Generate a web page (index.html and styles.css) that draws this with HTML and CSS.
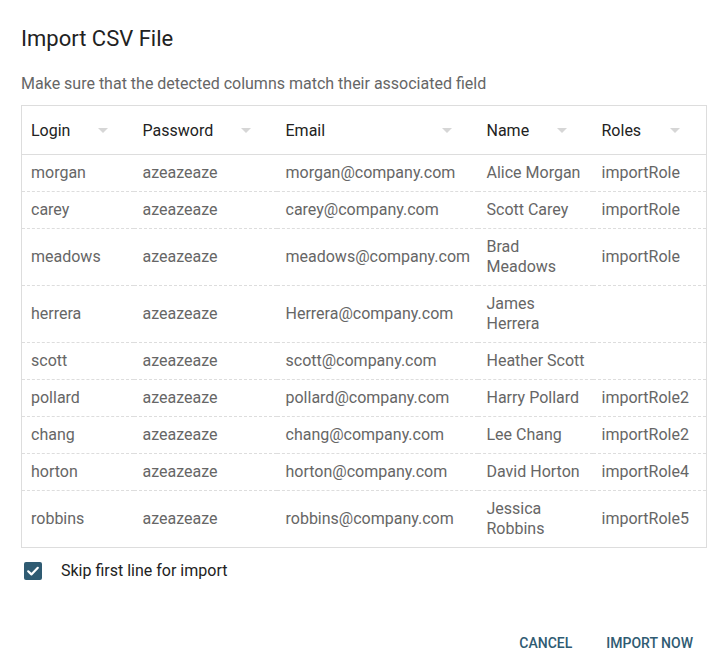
FILE: index.html
```html
<!DOCTYPE html>
<html>
<head>
<meta charset="utf-8">
<link rel="stylesheet" href="styles.css">
</head>
<body>
<div class="dialog">
  <h1 class="title">Import CSV File</h1>
  <p class="subtitle">Make sure that the detected columns match their associated field</p>
  <table class="grid">
    <colgroup>
      <col class="c1"><col class="c2"><col class="c3"><col class="c4"><col class="c5">
    </colgroup>
    <thead>
      <tr>
        <th><div class="hd"><span>Login</span><span class="caret"></span></div></th>
        <th><div class="hd"><span>Password</span><span class="caret"></span></div></th>
        <th><div class="hd"><span>Email</span><span class="caret"></span></div></th>
        <th><div class="hd"><span>Name</span><span class="caret"></span></div></th>
        <th><div class="hd"><span>Roles</span><span class="caret"></span></div></th>
      </tr>
    </thead>
    <tbody>
      <tr><td>morgan</td><td>azeazeaze</td><td>morgan@company.com</td><td>Alice Morgan</td><td>importRole</td></tr>
      <tr><td>carey</td><td>azeazeaze</td><td>carey@company.com</td><td>Scott Carey</td><td>importRole</td></tr>
      <tr><td>meadows</td><td>azeazeaze</td><td>meadows@company.com</td><td>Brad Meadows</td><td>importRole</td></tr>
      <tr><td>herrera</td><td>azeazeaze</td><td>Herrera@company.com</td><td>James Herrera</td><td></td></tr>
      <tr><td>scott</td><td>azeazeaze</td><td>scott@company.com</td><td>Heather Scott</td><td></td></tr>
      <tr><td>pollard</td><td>azeazeaze</td><td>pollard@company.com</td><td>Harry Pollard</td><td>importRole2</td></tr>
      <tr><td>chang</td><td>azeazeaze</td><td>chang@company.com</td><td>Lee Chang</td><td>importRole2</td></tr>
      <tr><td>horton</td><td>azeazeaze</td><td>horton@company.com</td><td>David Horton</td><td>importRole4</td></tr>
      <tr><td>robbins</td><td>azeazeaze</td><td>robbins@company.com</td><td>Jessica Robbins</td><td>importRole5</td></tr>
    </tbody>
  </table>
  <label class="check">
    <span class="box"><svg width="18" height="18" viewBox="0 0 18 18"><path d="M4.2 9.3 L7.4 12.4 L13.8 5.8" fill="none" stroke="#fff" stroke-width="2.2" stroke-linecap="round" stroke-linejoin="round"/></svg></span>
    <span class="check-label">Skip first line for import</span>
  </label>
  <div class="actions">
    <button class="btn">Cancel</button>
    <button class="btn">Import now</button>
  </div>
</div>
</body>
</html>
```
FILE: styles.css
```css
html, body {
  margin: 0;
  padding: 0;
  background: #fff;
}
body {
  font-family: Roboto, "Liberation Sans", Arial, sans-serif;
  color: #222;
}
.dialog {
  padding: 25px 9px 0 21px;
  width: 685px;
}
.title {
  margin: 0;
  font-size: 22px;
  font-weight: 400;
  line-height: 28px;
  color: #222;
}
.subtitle {
  margin: 21px 0 0;
  font-size: 16px;
  line-height: 20px;
  color: #666;
}
.grid {
  margin-top: 11px;
  width: 685px;
  table-layout: fixed;
  border-collapse: collapse;
  border: 1px solid #ddd;
  font-size: 16px;
}
.c1 { width: 112px; }
.c2 { width: 143px; }
.c3 { width: 201px; }
.c4 { width: 115px; }
.c5 { width: 114px; }
th {
  height: 48px;
  padding: 0 0 0 9px;
  text-align: left;
  font-weight: 400;
  color: #222;
  border-bottom: 1px solid #ddd;
}
.hd {
  display: flex;
  align-items: center;
  justify-content: space-between;
  padding-right: 26px;
}
.caret {
  width: 0;
  height: 0;
  border-left: 5px solid transparent;
  border-right: 5px solid transparent;
  border-top: 5px solid #d6d6d6;
}
td {
  padding: 8px 6px 8px 9px;
  line-height: 20px;
  color: #666;
  border-bottom: 1px dashed #ddd;
  vertical-align: middle;
}
tbody tr:last-child td {
  border-bottom: 1px solid #ddd;
}
.check {
  display: flex;
  align-items: center;
  margin-top: 13px;
  padding-left: 3px;
}
.box {
  width: 18px;
  height: 18px;
  border-radius: 2px;
  background: #2f5b72;
  display: flex;
}
.check-label {
  margin-left: 19px;
  font-size: 16px;
  line-height: 20px;
  color: #222;
}
.actions {
  display: flex;
  justify-content: flex-end;
  margin-top: 46px;
  gap: 18px;
}
.btn {
  font-family: Roboto, "Liberation Sans", Arial, sans-serif;
  background: none;
  border: none;
  padding: 8px 8px;
  font-size: 14px;
  font-weight: 500;
  text-transform: uppercase;
  color: #2f5b72;
  line-height: 16px;
  letter-spacing: 0;
}
.btn:last-child { margin-right: 5px; }
```
